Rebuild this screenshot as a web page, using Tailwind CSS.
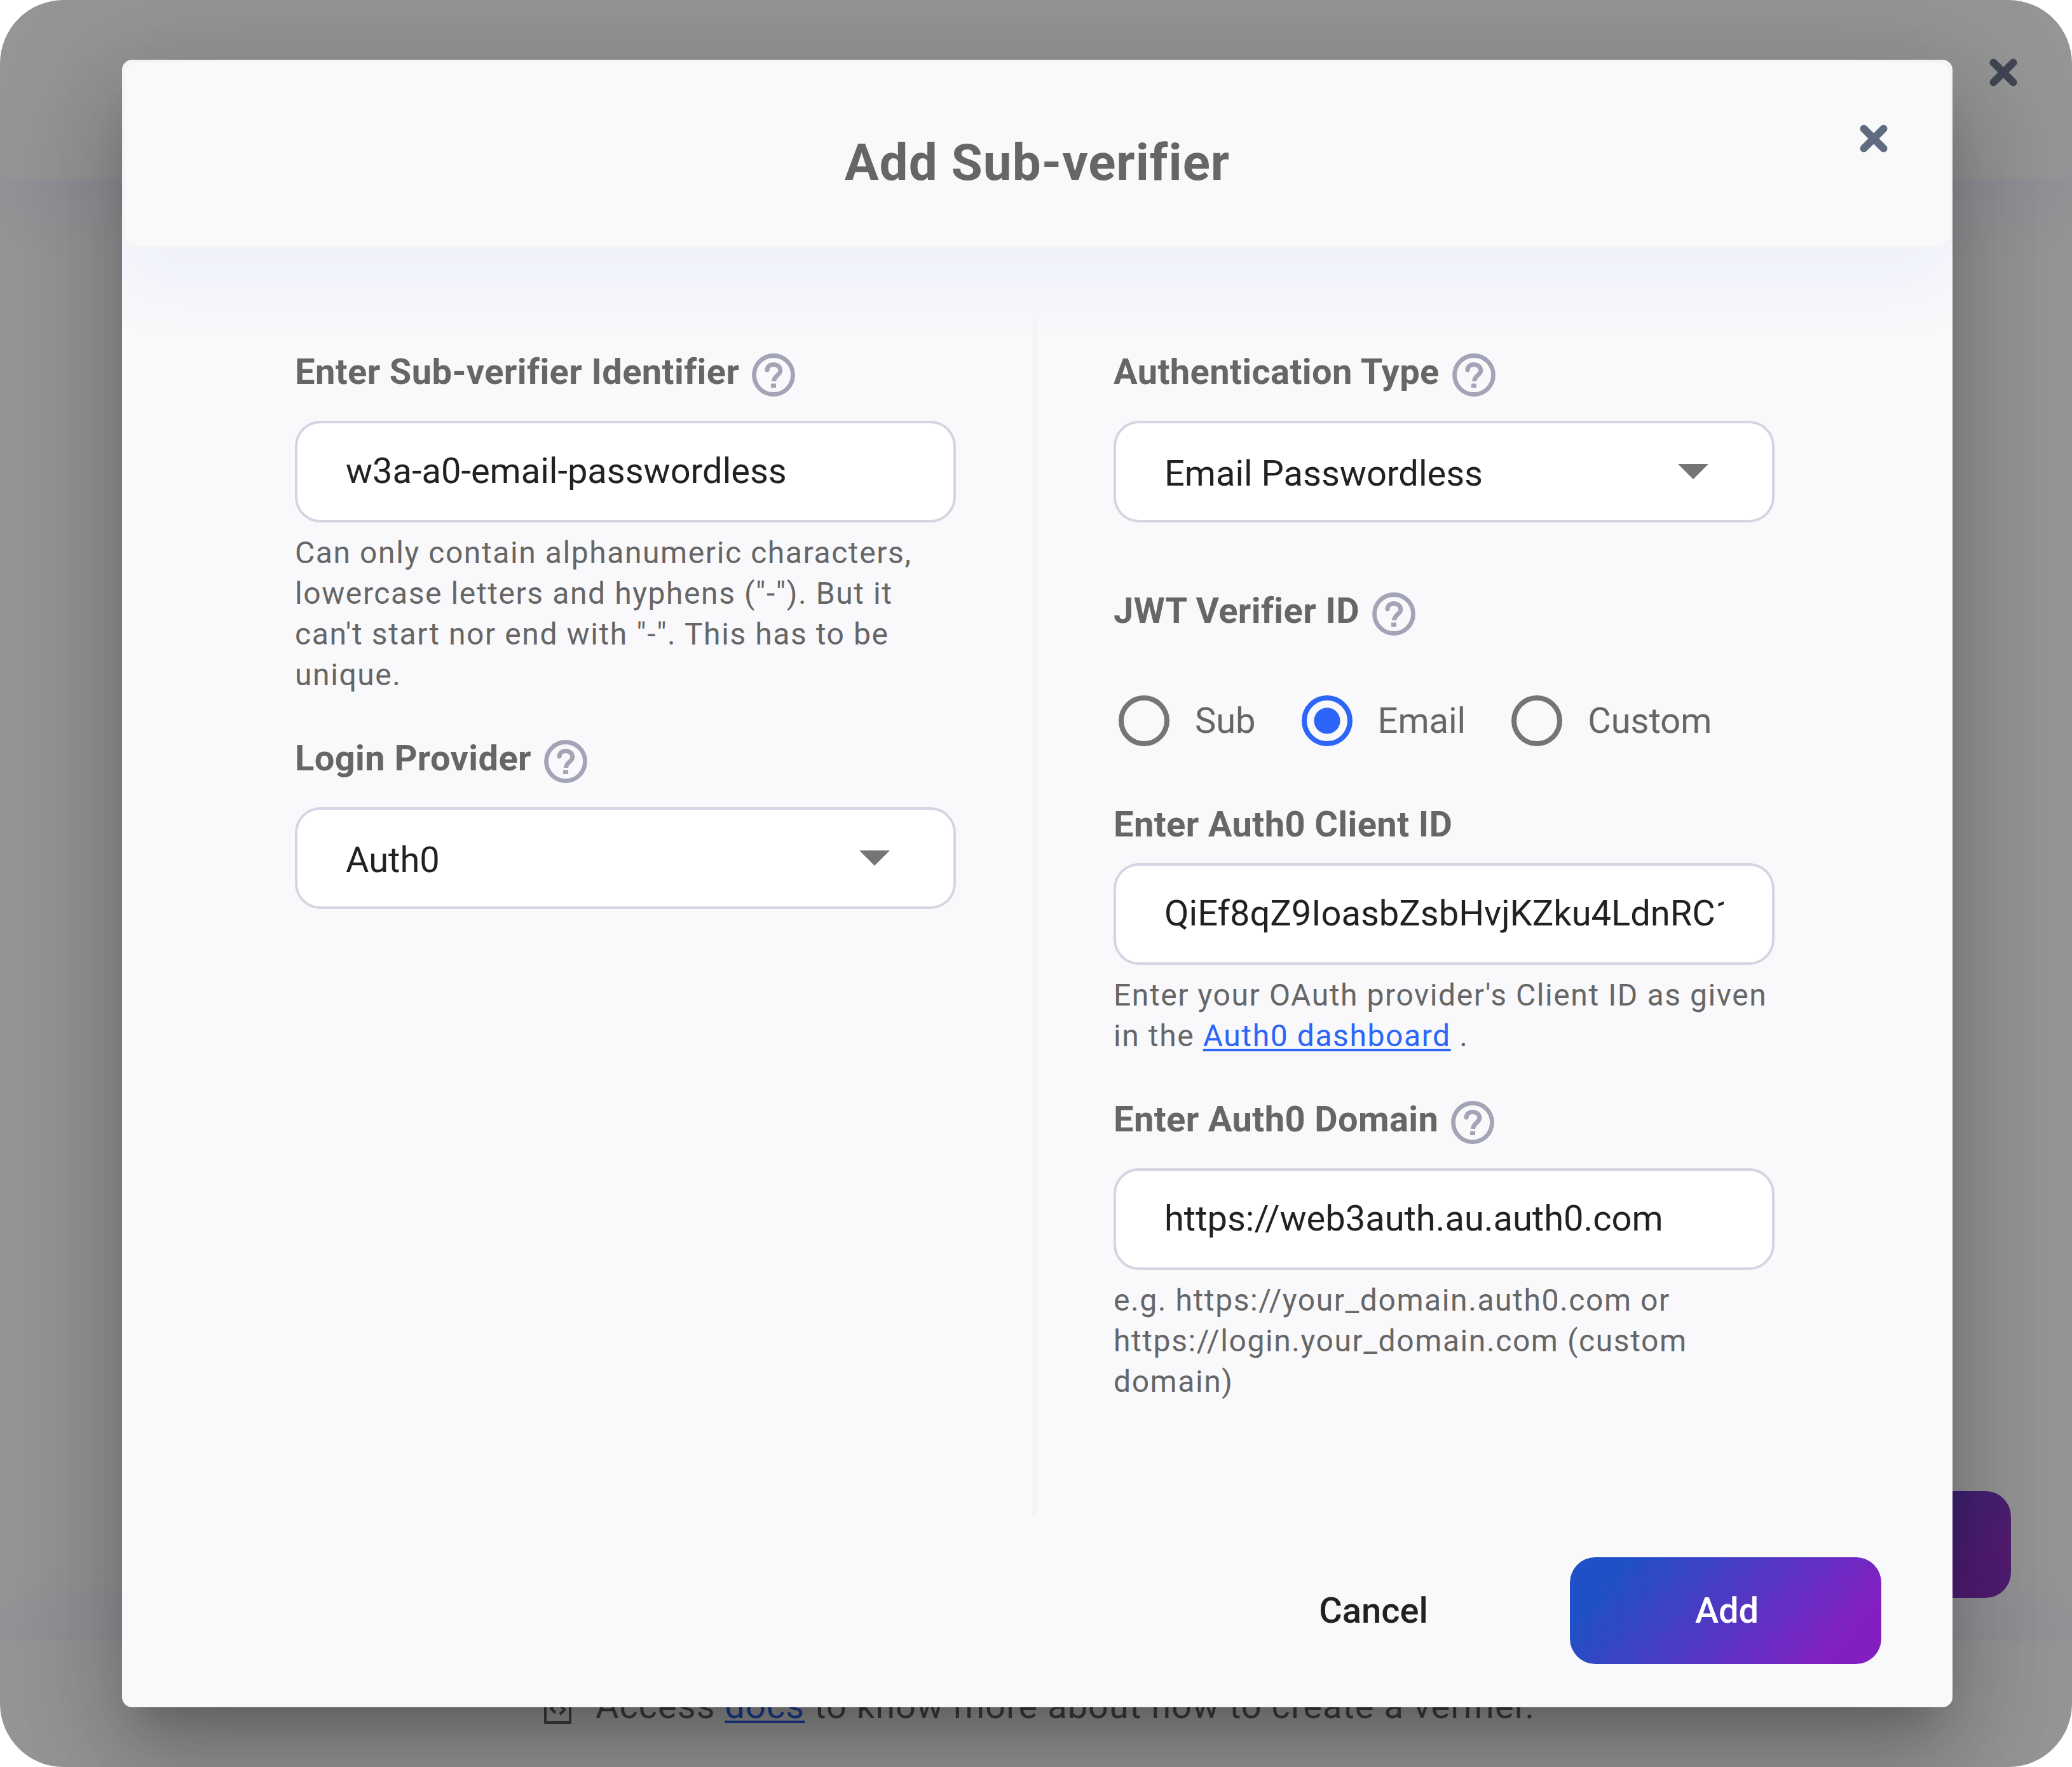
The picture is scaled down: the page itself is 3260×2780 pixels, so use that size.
<!DOCTYPE html>
<html lang="en">
<head>
<meta charset="utf-8">
<title>Add Sub-verifier</title>
<script src="https://cdn.jsdelivr.net/npm/@tailwindcss/browser@4"></script>
</head>
<body class="bg-white font-['Roboto',sans-serif] text-[56px]">
<svg class="hidden" aria-hidden="true">
  <symbol id="help" viewBox="0 0 68 68">
    <circle cx="34" cy="34" r="30.5" fill="none" stroke="#a3a5b7" stroke-width="6.8"/>
    <path d="M24 26.5C24 20.5 28.5 17.5 34.2 17.5C40 17.5 44.8 21.5 44.8 27C44.8 34 34.6 35 34.6 44" fill="none" stroke="#a3a5b7" stroke-width="7"/>
    <circle cx="24" cy="26" r="3.5" fill="#a3a5b7"/>
    <rect x="30" y="47.5" width="8" height="6.5" fill="#a3a5b7"/>
  </symbol>
  <symbol id="close" viewBox="0 0 44 44">
    <path d="M6.5 6.5L37.5 37.5M37.5 6.5L6.5 37.5" fill="none" stroke="currentColor" stroke-width="12" stroke-linecap="round"/>
  </symbol>
</svg>

<div class="grid min-h-screen overflow-hidden rounded-[100px] bg-[#f9f9fb]">
  <!-- Page behind the dialog -->
  <div class="col-start-1 row-start-1 flex flex-col" aria-hidden="true">
    <header class="flex h-[282px] items-start justify-end rounded-b-3xl pt-23 pr-[86px] shadow-[0_56px_112px_rgba(46,91,255,0.06)]">
      <button type="button" tabindex="-1" class="text-[#6b7689]"><svg class="size-11"><use href="#close"/></svg></button>
    </header>
    <main class="flex flex-1 items-end justify-end pr-24 pb-17">
      <button type="button" tabindex="-1" class="h-42 w-[490px] rounded-[40px] bg-linear-[130deg,#2050c5_15%,#8a30c0_86%] font-medium text-white">Save</button>
    </main>
    <footer class="flex h-[198px] items-start justify-center pt-[70px] text-[#666] shadow-[0_-56px_112px_rgba(46,91,255,0.05)]">
      <svg class="mt-1 mr-7 size-16" viewBox="0 0 64 64" fill="none" stroke="currentColor" stroke-width="4">
        <path d="M13 8H40L52 20V54H13Z"/><path d="M29 25L22 32L29 39M36 27L43 34L36 41"/>
      </svg>
      <p class="leading-16 tracking-[0.018em]">Access <a href="#" tabindex="-1" class="text-[#2f66f6] underline decoration-4 underline-offset-4">docs</a> to know more about how to create a verifier.</p>
    </footer>
  </div>

  <!-- Dialog -->
  <div class="relative col-start-1 row-start-1 bg-black/40 pt-[94px] pr-47 pb-[94px] pl-48">
    <div role="dialog" aria-labelledby="dialog-title" class="rounded-2xl shadow-[0_44px_60px_-28px_rgba(0,0,0,0.2),0_96px_152px_12px_rgba(0,0,0,0.14),0_36px_184px_32px_rgba(0,0,0,0.12)]">
      <form class="overflow-hidden rounded-2xl bg-[#f9f9fb]">
        <header class="grid grid-cols-[1fr_auto_1fr] items-start rounded-3xl border-4 border-[#f4f4f5] bg-[#f9f9fb] pt-[98px] pr-[98px] pb-[70px] shadow-[0_56px_112px_rgba(46,91,255,0.06)]">
          <h1 id="dialog-title" class="col-start-2 pl-[98px] text-[80px] leading-[120px] font-bold tracking-[0.0125em] text-[#666]">Add Sub-verifier</h1>
          <button type="button" aria-label="Close" class="justify-self-end text-[#5f6c80]"><svg class="size-11"><use href="#close"/></svg></button>
        </header>

        <div class="mt-[110px] grid grid-cols-2">
          <section class="border-r-8 border-[#f4f4f6] pt-14 pr-30 pl-68">
            <div class="flex items-start gap-5">
              <label for="identifier" class="leading-[58px] font-bold tracking-[0.007em] text-[#666]">Enter Sub-verifier Identifier</label>
              <svg class="size-17"><use href="#help"/></svg>
            </div>
            <input id="identifier" type="text" value="w3a-a0-email-passwordless" class="mt-[38px] block h-40 w-full rounded-[40px] border-4 border-[#d3d5e2] bg-white px-19 pb-0.5 text-black/87 outline-none">
            <p class="mt-4 text-[48px] leading-16 tracking-[0.033em] text-[#666]">Can only contain alphanumeric characters, lowercase letters and hyphens ("-"). But it can't start nor end with "-". This has to be unique.</p>

            <div class="mt-[70px] flex items-start gap-5">
              <label for="provider" class="leading-[58px] font-bold tracking-[0.007em] text-[#666]">Login Provider</label>
              <svg class="size-17"><use href="#help"/></svg>
            </div>
            <div class="relative mt-[38px]">
              <select id="provider" class="block h-40 w-full appearance-none rounded-[40px] border-4 border-[#d3d5e2] bg-white px-19 pt-1.5 text-black/87 outline-none"><option>Auth0</option></select>
              <svg class="pointer-events-none absolute top-17 right-26 h-6 w-12" viewBox="0 0 48 24"><path d="M0 0H48L24 24Z" fill="#757575"/></svg>
            </div>
          </section>

          <section class="pt-14 pr-70 pb-[178px] pl-30">
            <div class="flex items-start gap-5">
              <label for="auth-type" class="leading-[58px] font-bold tracking-[0.007em] text-[#666]">Authentication Type</label>
              <svg class="size-17"><use href="#help"/></svg>
            </div>
            <div class="relative mt-[38px]">
              <select id="auth-type" class="block h-40 w-full appearance-none rounded-[40px] border-4 border-[#d3d5e2] bg-white px-19 pt-1.5 text-black/87 outline-none"><option>Email Passwordless</option></select>
              <svg class="pointer-events-none absolute top-17 right-26 h-6 w-12" viewBox="0 0 48 24"><path d="M0 0H48L24 24Z" fill="#757575"/></svg>
            </div>

            <fieldset class="mt-[110px]">
              <legend class="flex items-start gap-5">
                <span class="leading-[58px] font-bold tracking-[0.007em] text-[#666]">JWT Verifier ID</span>
                <svg class="size-17"><use href="#help"/></svg>
              </legend>
              <div class="mt-[94px] flex items-center gap-18 pl-2 text-[#666]">
                <label class="flex items-center gap-10 leading-20"><input type="radio" name="jwt" class="size-20 appearance-none rounded-full border-8 border-[#757575] checked:border-[#2c65f8] checked:bg-[radial-gradient(circle,#2c65f8_20px,transparent_21px)]">Sub</label>
                <label class="flex items-center gap-10 leading-20"><input type="radio" name="jwt" checked class="size-20 appearance-none rounded-full border-8 border-[#757575] checked:border-[#2c65f8] checked:bg-[radial-gradient(circle,#2c65f8_20px,transparent_21px)]">Email</label>
                <label class="flex items-center gap-10 leading-20"><input type="radio" name="jwt" class="size-20 appearance-none rounded-full border-8 border-[#757575] checked:border-[#2c65f8] checked:bg-[radial-gradient(circle,#2c65f8_20px,transparent_21px)]">Custom</label>
              </div>
            </fieldset>

            <label for="client-id" class="mt-[94px] block leading-[58px] font-bold tracking-[0.007em] text-[#666]">Enter Auth0 Client ID</label>
            <input id="client-id" type="text" value="QiEf8qZ9IoasbZsbHvjKZku4LdnRC1" class="mt-8 block h-40 w-full rounded-[40px] border-4 border-[#d3d5e2] bg-white px-19 pb-0.5 text-black/87 outline-none">
            <p class="mt-4 text-[48px] leading-16 tracking-[0.033em] text-[#666]">Enter your OAuth provider's Client ID as given in the <a href="#" class="text-[#2c65f8] underline decoration-4 underline-offset-4">Auth0 dashboard</a> .</p>

            <div class="mt-[70px] flex items-start gap-5">
              <label for="domain" class="leading-[58px] font-bold tracking-[0.007em] text-[#666]">Enter Auth0 Domain</label>
              <svg class="size-17"><use href="#help"/></svg>
            </div>
            <input id="domain" type="text" value="https://web3auth.au.auth0.com" class="mt-[38px] block h-40 w-full rounded-[40px] border-4 border-[#d3d5e2] bg-white px-19 pb-0.5 text-black/87 outline-none">
            <p class="mt-4 text-[48px] leading-16 tracking-[0.033em] text-[#666]">e.g. https://your_domain.auth0.com or https://login.your_domain.com (custom domain)</p>
          </section>
        </div>

        <footer class="flex justify-end gap-16 pt-[66px] pr-28 pb-17">
          <button type="button" class="h-42 w-[490px] rounded-[40px] font-medium text-black/87">Cancel</button>
          <button type="button" class="h-42 w-[490px] rounded-[40px] bg-linear-[130deg,#2050c5_15%,#831fc1_86%] pl-1 font-medium text-white">Add</button>
        </footer>
      </form>
    </div>
  </div>
</div>
</body>
</html>
